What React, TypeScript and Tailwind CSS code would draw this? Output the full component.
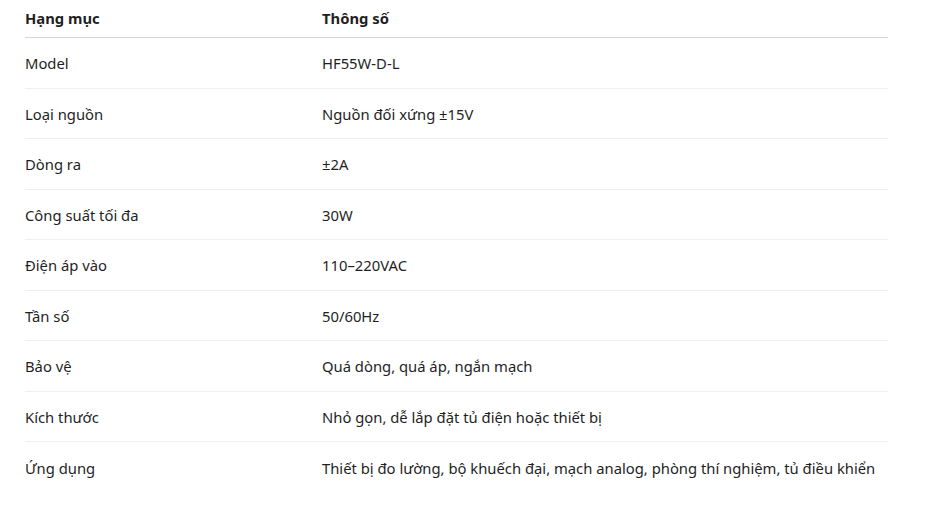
export default function App() {
  const rows: [string, string][] = [
    ["Model", "HF55W-D-L"],
    ["Loại nguồn", "Nguồn đối xứng ±15V"],
    ["Dòng ra", "±2A"],
    ["Công suất tối đa", "30W"],
    ["Điện áp vào", "110–220VAC"],
    ["Tần số", "50/60Hz"],
    ["Bảo vệ", "Quá dòng, quá áp, ngắn mạch"],
    ["Kích thước", "Nhỏ gọn, dễ lắp đặt tủ điện hoặc thiết bị"],
    ["Ứng dụng", "Thiết bị đo lường, bộ khuếch đại, mạch analog, phòng thí nghiệm, tủ điều khiển"],
  ];
  return (
    <div
      className="w-[951px] h-[509px] bg-white text-[#1f1f1f] text-[14.8px]"
      style={{ fontFamily: '"Noto Sans", sans-serif' }}
    >
      <div className="ml-[25px] w-[863px]">
        <div className="grid grid-cols-[297px_1fr] h-[38px] items-center border-b border-[#d6d6d6] font-bold">
          <div>Hạng mục</div>
          <div>Thông số</div>
        </div>
        {rows.map(([a, b], i) => (
          <div
            key={a}
            className={
              i < rows.length - 1
                ? "grid grid-cols-[297px_1fr] h-[50.5px] items-center pt-[1px] border-b border-[#efefef]"
                : "grid grid-cols-[297px_1fr] h-[50.5px] items-center pt-[1px]"
            }
          >
            <div>{a}</div>
            <div>{b}</div>
          </div>
        ))}
      </div>
    </div>
  );
}
